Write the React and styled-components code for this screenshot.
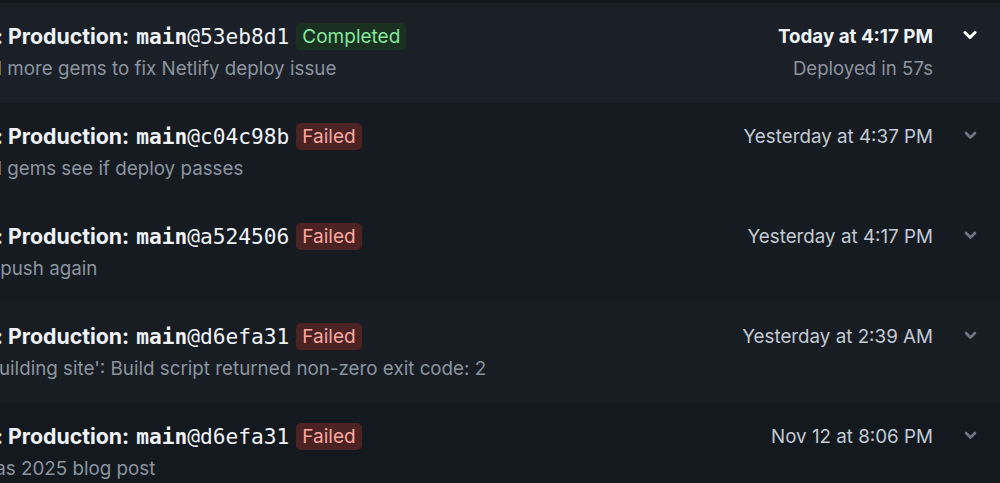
import React from "react";
import styled, { createGlobalStyle } from "styled-components";

const GlobalStyle = createGlobalStyle`
    html, body {
        margin: 0;
        padding: 0;
        background: #13181f;
        overflow: hidden;
    }
    * {
        box-sizing: border-box;
    }
`;

const List = styled.div`
    width: 1000px;
    height: 483px;
    overflow: hidden;
    display: flex;
    flex-direction: column;
    border-top: 3px solid #12171d;
    font-family: Inter, "Noto Sans", sans-serif;
`;

const Row = styled.div`
    height: 100px;
    flex-shrink: 0;
    display: flex;
    align-items: flex-start;
    padding-top: 19px;
    background: ${(p) => p.$bg};
    overflow: hidden;
`;

// the list is scrolled sideways in the shot, so the start of each line sits off screen
const Main = styled.div`
    flex: 1;
    min-width: 0;
    display: flex;
    flex-direction: column;
    margin-left: -34px;
`;

const TitleLine = styled.div`
    display: flex;
    align-items: center;
    height: 28px;
    white-space: nowrap;
`;

const Lead = styled.span`
    width: 37px;
    margin-right: 5px;
    display: flex;
    justify-content: flex-end;
    overflow: hidden;
    font-size: 21px;
    font-weight: 700;
    color: #f0f3f6;
`;

const Title = styled.span`
    font-size: 21.3px;
    font-weight: 700;
    color: #f0f3f6;
`;

const Ref = styled.span`
    font-family: "DejaVu Sans Mono", "Liberation Mono", monospace;
    font-size: 21.2px;
    color: #f0f3f6;
    margin-left: 7px;
`;

const Branch = styled.b`
    font-weight: 700;
`;

const Badge = styled.span`
    margin-left: 7px;
    height: 27px;
    display: inline-flex;
    align-items: center;
    padding: 0 6px;
    border-radius: 5px;
    font-size: 19px;
    color: ${(p) => (p.$ok ? "#85e89d" : "#ffa8a0")};
    background: ${(p) => (p.$ok ? "#1a3122" : "#4b2323")};
`;

const Message = styled.div`
    margin-top: 7px;
    font-size: 18.8px;
    color: #8b949e;
    white-space: nowrap;
`;

const Side = styled.div`
    width: 240px;
    display: flex;
    flex-direction: column;
    align-items: flex-end;
    padding-right: 67px;
    position: relative;
`;

const Time = styled.div`
    height: 28px;
    display: flex;
    align-items: center;
    font-size: 18.8px;
    white-space: nowrap;
    font-weight: ${(p) => (p.$strong ? 700 : 400)};
    color: ${(p) => (p.$strong ? "#f0f3f6" : "#c3cad3")};
`;

const Duration = styled.div`
    margin-top: 7px;
    font-size: 18.6px;
    color: #8b949e;
    white-space: nowrap;
`;

const Toggle = styled.div`
    position: absolute;
    right: 22px;
    top: 5px;
    width: 16px;
    height: 16px;
    display: flex;
    align-items: center;
    justify-content: center;
    color: ${(p) => (p.$strong ? "#ffffff" : "#6e7681")};
`;

function Chevron({ strong }) {
    return strong ? (
        <svg width="14" height="10" viewBox="0 0 14 10">
            <path d="M2 2.5 L7 7.5 L12 2.5" fill="none" stroke="currentColor" strokeWidth="3" strokeLinecap="round" strokeLinejoin="round" />
        </svg>
    ) : (
        <svg width="13" height="9" viewBox="0 0 13 9">
            <path d="M2 2 L6.5 6.5 L11 2" fill="none" stroke="currentColor" strokeWidth="2.6" strokeLinecap="round" strokeLinejoin="round" />
        </svg>
    );
}

const deploys = [
    { hash: "53eb8d1", ok: true, msg: "Add more gems to fix Netlify deploy issue", time: "Today at 4:17 PM", dur: "Deployed in 57s", bg: "#1b2028", open: true },
    { hash: "c04c98b", ok: false, msg: "Add gems see if deploy passes", time: "Yesterday at 4:37 PM", bg: "#161b22" },
    { hash: "a524506", ok: false, msg: "Try push again", time: "Yesterday at 4:17 PM", bg: "#161b22" },
    { hash: "d6efa31", ok: false, msg: "a 'building site': Build script returned non-zero exit code: 2", time: "Yesterday at 2:39 AM", bg: "#181d24" },
    { hash: "d6efa31", ok: false, msg: "Xmas 2025 blog post", time: "Nov 12 at 8:06 PM", bg: "#141920" },
];

export default function App() {
    return (
        <>
            <GlobalStyle />
            <List>
                {deploys.map((d, i) => (
                    <Row key={i} $bg={d.bg}>
                        <Main>
                            <TitleLine>
                                <Lead>Deploy:</Lead>
                                <Title>Production:</Title>
                                <Ref>
                                    <Branch>main</Branch>@{d.hash}
                                </Ref>
                                <Badge $ok={d.ok}>{d.ok ? "Completed" : "Failed"}</Badge>
                            </TitleLine>
                            <Message>{d.msg}</Message>
                        </Main>
                        <Side>
                            <Time $strong={d.open}>{d.time}</Time>
                            {d.dur && <Duration>{d.dur}</Duration>}
                            <Toggle $strong={d.open}>
                                <Chevron strong={d.open} />
                            </Toggle>
                        </Side>
                    </Row>
                ))}
            </List>
        </>
    );
}
